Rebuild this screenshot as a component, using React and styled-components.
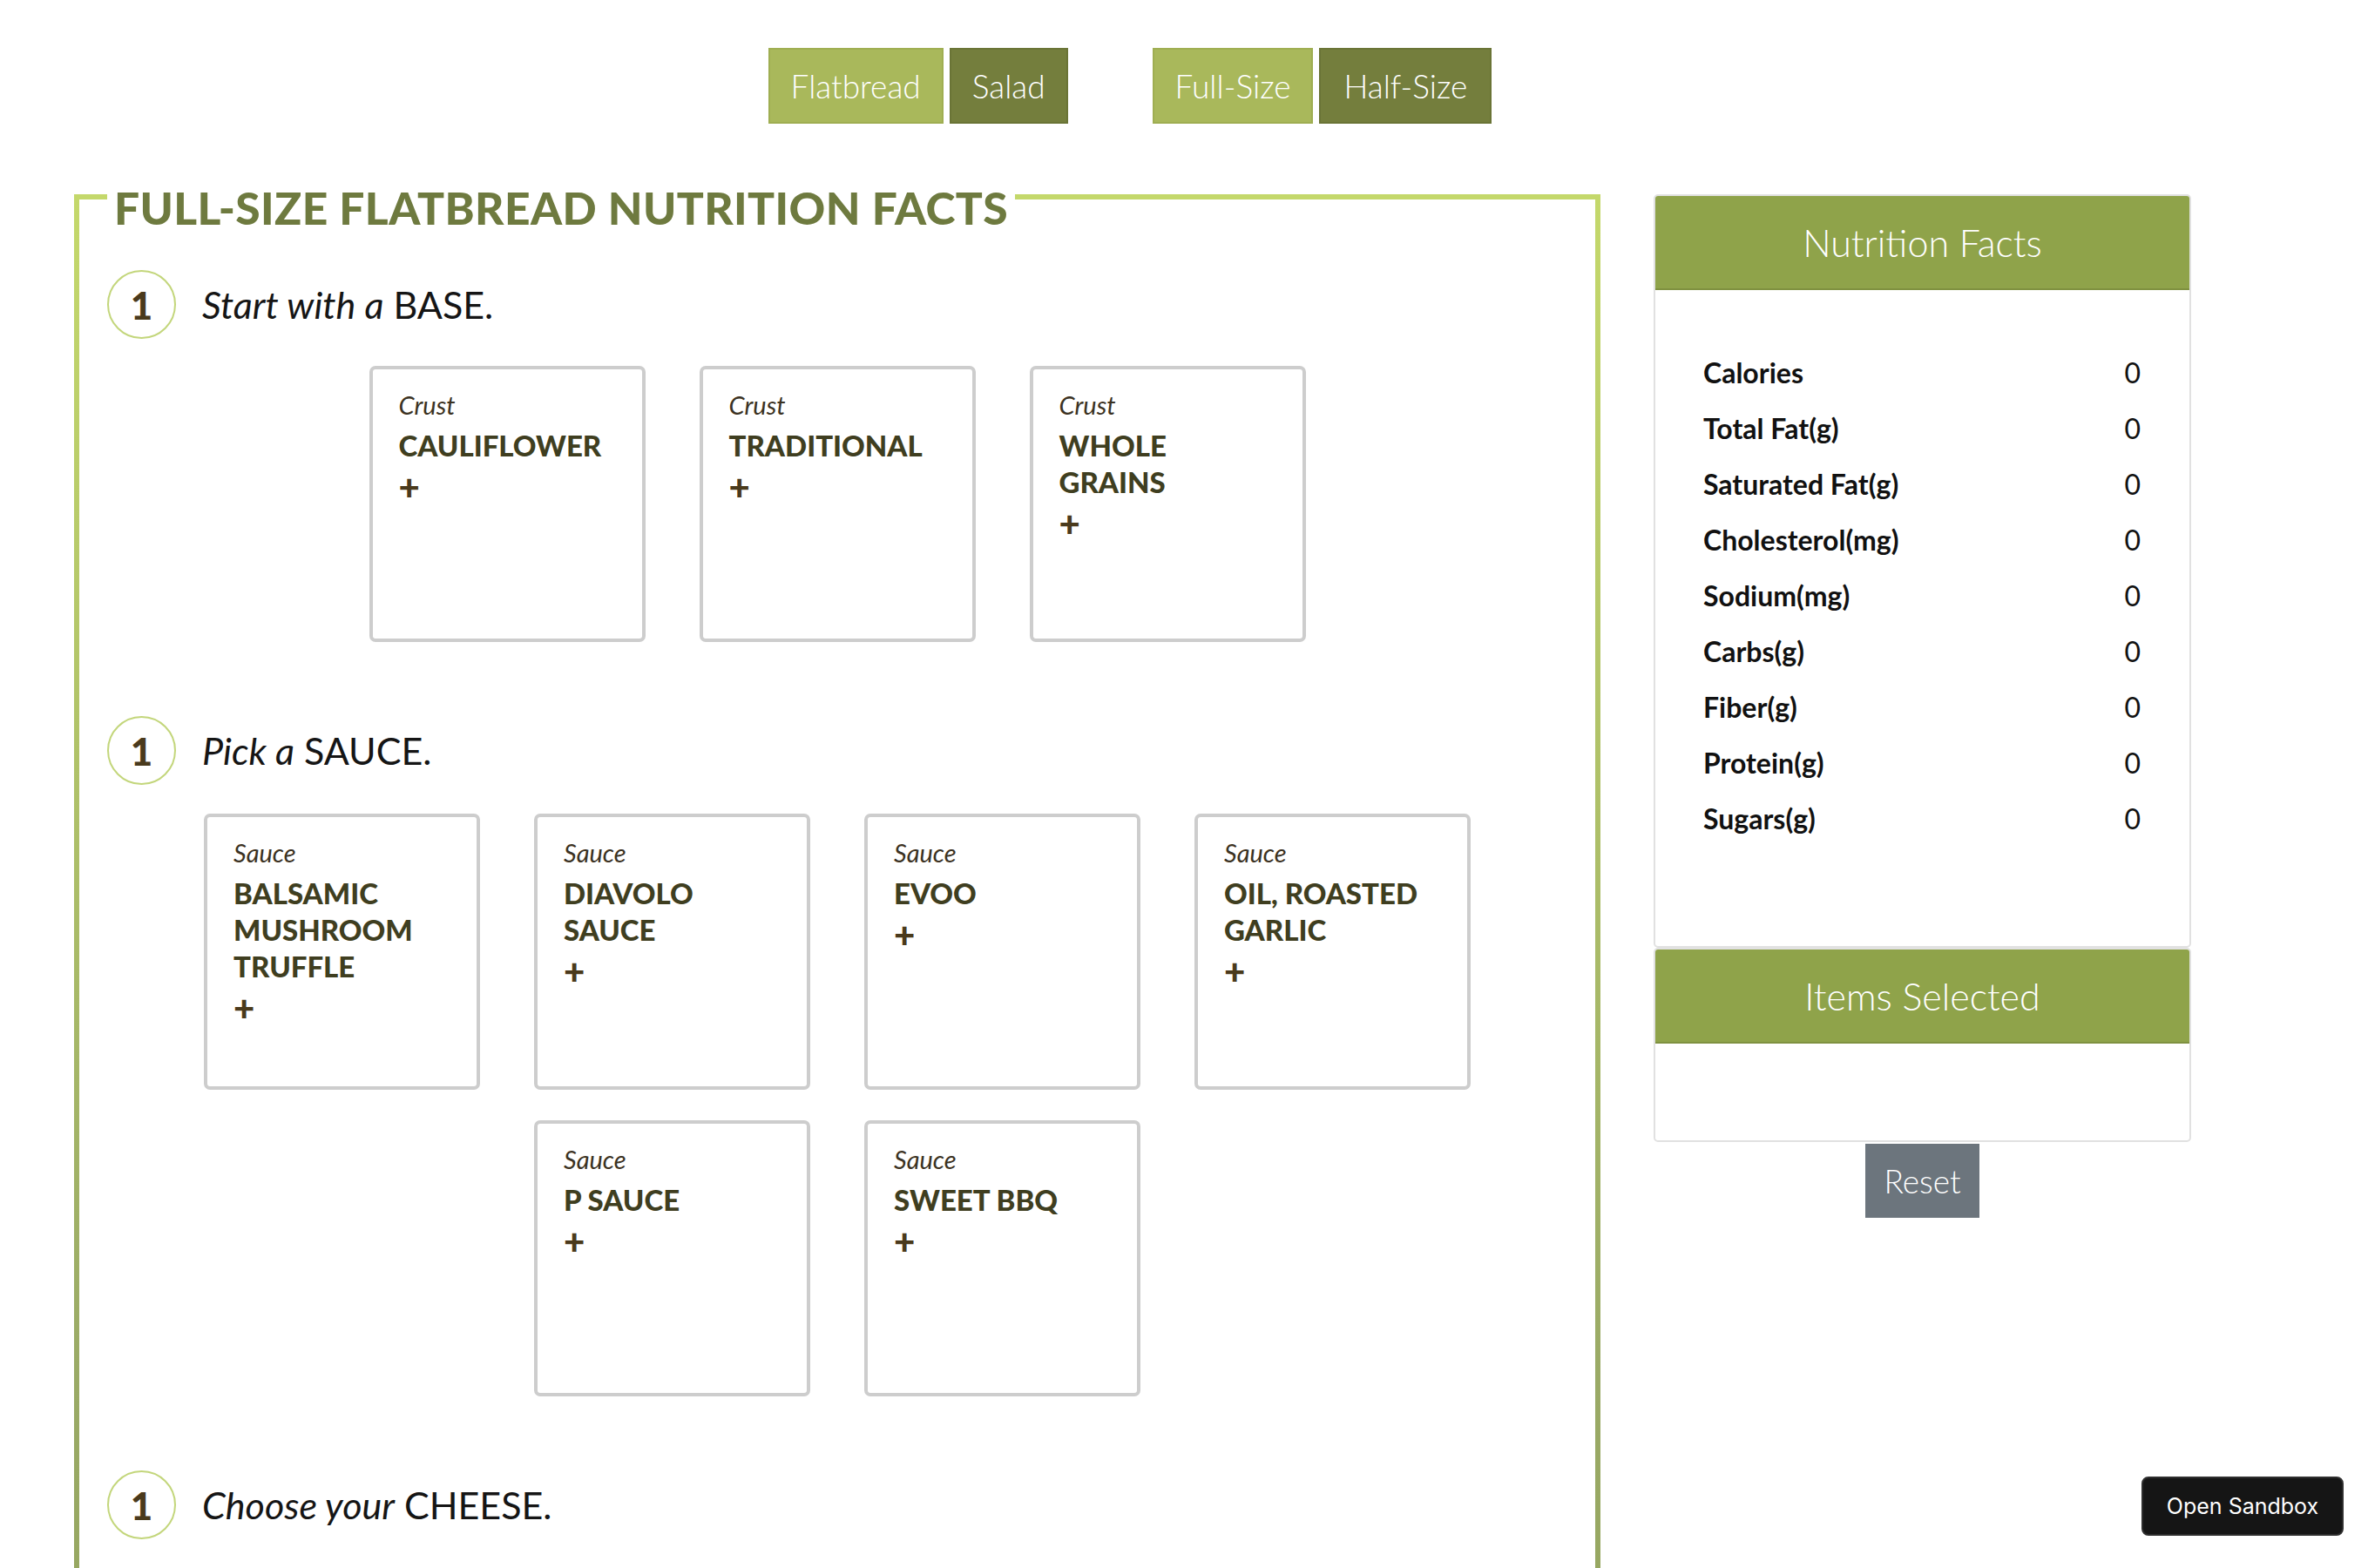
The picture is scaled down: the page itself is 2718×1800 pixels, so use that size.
import React, { useState } from 'react';
import styled, { createGlobalStyle } from 'styled-components';

const GlobalStyle = createGlobalStyle`
  body {
    margin: 0;
    background: #fff;
    font-family: 'Lato', 'Open Sans', sans-serif;
  }
`

const Page = styled.div`
  width: 2718px;
  min-height: 1800px;
  box-sizing: border-box;
`

const TopBar = styled.div`
  display: flex;
  justify-content: center;
  gap: 97px;
  padding: 55px 124px 0 0;
`

const ButtonGroup = styled.div`
  display: flex;
  gap: 7px;
`

const ToggleButton = styled.button`
  height: 87px;
  padding: 0 ${props => props.wide ? 26 : 24}px;
  border: 2px solid ${props => props.active ? '#9fae52' : '#6a7436'};
  background-color: ${props => props.active ? '#a9b85b' : '#747e3d'};
  color: #fff;
  font-family: 'Lato', sans-serif;
  font-weight: 300;
  font-size: 37px;
  cursor: pointer;
`

const Main = styled.div`
  display: flex;
  align-items: flex-start;
  gap: 61px;
  padding: 0 0 0 85px;
  margin-top: 50px;
`

const Fieldset = styled.fieldset`
  width: 1752px;
  min-height: 2300px;
  margin: 0;
  padding: 0 0 0 32px;
  box-sizing: border-box;
  border: 6px solid #c3d66b;
  border-image: linear-gradient(to bottom, #c4d86b 0%, #9aaa66 60%, #8e9f53 100%) 1;
`

const Legend = styled.legend`
  margin-left: 0;
  padding: 24px 8px 0;
  color: #6e7a3f;
  font-family: 'Lato', sans-serif;
  font-weight: 900;
  font-size: 51.5px;
  line-height: 44px;
  letter-spacing: 0.4px;
`

const Step = styled.div`
  display: flex;
  align-items: center;
  gap: 30px;
  margin-top: ${props => props.top}px;
`

const StepNumber = styled.div`
  width: 79px;
  height: 79px;
  box-sizing: border-box;
  border: 2px solid #c3d67b;
  border-radius: 50%;
  display: flex;
  align-items: center;
  justify-content: center;
  color: #4a3a1c;
  font-weight: 900;
  font-size: 44px;
`

const StepText = styled.div`
  font-size: 43px;
  color: #151515;

  em {
    font-style: italic;
  }
`

const CardGrid = styled.div`
  display: flex;
  flex-wrap: wrap;
  justify-content: center;
  gap: 35px 62px;
  margin: ${props => props.top || 31}px 32px 0 0;
`

const Card = styled.div`
  width: 317px;
  height: 317px;
  box-sizing: border-box;
  border: 4px solid #cdcdcd;
  border-radius: 7px;
  padding: 21px 30px;
  cursor: pointer;
`

const Category = styled.div`
  font-style: italic;
  font-size: 29px;
  line-height: 40px;
  color: #3b3222;
`

const ItemName = styled.div`
  font-weight: 900;
  font-size: 33px;
  line-height: 42px;
  color: #3f3e20;
  margin-top: 5px;
`

const Plus = styled.div`
  font-weight: 900;
  font-size: 42px;
  line-height: 52px;
  color: #4a3a1c;
`

const Side = styled.aside`
  width: 617px;
  margin-top: 31px;
  display: flex;
  flex-direction: column;
  align-items: center;
`

const Panel = styled.div`
  width: 100%;
  box-sizing: border-box;
  border: 2px solid #e1e1e1;
  border-radius: 5px;
  overflow: hidden;
`

const PanelHeader = styled.div`
  height: 108px;
  background-color: #8fa34a;
  border-bottom: 2px solid #7f9140;
  box-sizing: border-box;
  display: flex;
  align-items: center;
  justify-content: center;
  color: #fff;
  font-weight: 300;
  font-size: 43px;
`

const FactsBody = styled.div`
  padding: 62px 56px 115px 55px;
`

const FactRow = styled.div`
  display: flex;
  justify-content: space-between;
  align-items: center;
  height: 64px;
  font-size: 32px;
  color: #111;
`

const FactLabel = styled.span`
  font-weight: 700;
`

const SelectedBody = styled.div`
  height: 111px;
`

const ResetButton = styled.button`
  margin-top: 2px;
  width: 131px;
  height: 85px;
  border: none;
  background-color: #6c757d;
  color: #fff;
  font-family: 'Lato', sans-serif;
  font-weight: 300;
  font-size: 37px;
  cursor: pointer;
`

const SandboxButton = styled.button`
  position: fixed;
  right: 28px;
  bottom: 37px;
  width: 232px;
  height: 68px;
  border: 2px solid #2e2e2e;
  border-radius: 8px;
  background-color: #151515;
  color: #fff;
  font-family: 'Inter', sans-serif;
  font-size: 25px;
`

const bases = [['CAULIFLOWER'], ['TRADITIONAL'], ['WHOLE', 'GRAINS']];
const sauces = [
  ['BALSAMIC', 'MUSHROOM', 'TRUFFLE'],
  ['DIAVOLO', 'SAUCE'],
  ['EVOO'],
  ['OIL, ROASTED', 'GARLIC'],
  ['P SAUCE'],
  ['SWEET BBQ'],
];
const facts = ['Calories', 'Total Fat(g)', 'Saturated Fat(g)', 'Cholesterol(mg)', 'Sodium(mg)', 'Carbs(g)', 'Fiber(g)', 'Protein(g)', 'Sugars(g)'];

function ItemCard({ category, lines }) {
  return (
    <Card>
      <Category>{category}</Category>
      <ItemName>{lines.map(l => <div key={l}>{l}</div>)}</ItemName>
      <Plus>+</Plus>
    </Card>
  )
}

export default function App() {
  const [menu, setMenu] = useState('flatbread');
  const [size, setSize] = useState('full');

  return (
    <Page>
      <GlobalStyle />
      <TopBar>
        <ButtonGroup>
          <ToggleButton active={menu === 'flatbread' || undefined} onClick={() => setMenu('flatbread')}>Flatbread</ToggleButton>
          <ToggleButton onClick={() => setMenu('salad')}>Salad</ToggleButton>
        </ButtonGroup>
        <ButtonGroup>
          <ToggleButton active={size === 'full' || undefined} onClick={() => setSize('full')}>Full-Size</ToggleButton>
          <ToggleButton wide onClick={() => setSize('half')}>Half-Size</ToggleButton>
        </ButtonGroup>
      </TopBar>

      <Main>
        <Fieldset>
          <Legend>FULL-SIZE FLATBREAD NUTRITION FACTS</Legend>

          <Step top={50}>
            <StepNumber>1</StepNumber>
            <StepText><em>Start with a</em> BASE.</StepText>
          </Step>
          <CardGrid>
            {bases.map(b => <ItemCard key={b[0]} category="Crust" lines={b} />)}
          </CardGrid>

          <Step top={85}>
            <StepNumber>1</StepNumber>
            <StepText><em>Pick a</em> SAUCE.</StepText>
          </Step>
          <CardGrid top={33}>
            {sauces.map(s => <ItemCard key={s[0]} category="Sauce" lines={s} />)}
          </CardGrid>

          <Step top={85}>
            <StepNumber>1</StepNumber>
            <StepText><em>Choose your</em> CHEESE.</StepText>
          </Step>
        </Fieldset>

        <Side>
          <Panel>
            <PanelHeader>Nutrition Facts</PanelHeader>
            <FactsBody>
              {facts.map(f => (
                <FactRow key={f}>
                  <FactLabel>{f}</FactLabel>
                  <span>0</span>
                </FactRow>
              ))}
            </FactsBody>
          </Panel>
          <Panel>
            <PanelHeader>Items Selected</PanelHeader>
            <SelectedBody />
          </Panel>
          <ResetButton>Reset</ResetButton>
        </Side>
      </Main>

      <SandboxButton>Open Sandbox</SandboxButton>
    </Page>
  )
}
